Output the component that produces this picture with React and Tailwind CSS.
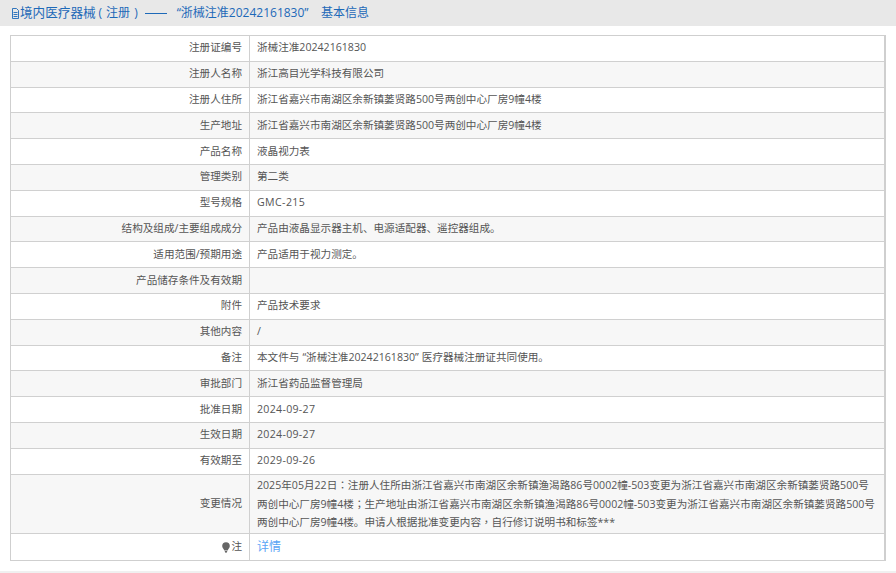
const Q = ({ children }) => <span className="font-['Noto_Sans_CJK_TC',sans-serif]">{children}</span>;

const rows = [
  ["注册证编号", "浙械注准20242161830"],
  ["注册人名称", "浙江高目光学科技有限公司"],
  ["注册人住所", "浙江省嘉兴市南湖区余新镇蒌贤路500号两创中心厂房9幢4楼"],
  ["生产地址", "浙江省嘉兴市南湖区余新镇蒌贤路500号两创中心厂房9幢4楼"],
  ["产品名称", "液晶视力表"],
  ["管理类别", "第二类"],
  ["型号规格", <span className="tracking-[0.4px]">GMC-215</span>],
  ["结构及组成/主要组成成分", "产品由液晶显示器主机、电源适配器、遥控器组成。"],
  ["适用范围/预期用途", "产品适用于视力测定。"],
  ["产品储存条件及有效期", ""],
  ["附件", "产品技术要求"],
  ["其他内容", "/"],
  ["备注", <>本文件与<span className="ml-[3px]">“</span>浙械注准20242161830<span className="mr-[3px]">”</span>医疗器械注册证共同使用。</>],
  ["审批部门", "浙江省药品监督管理局"],
  ["批准日期", <span className="tracking-[0.3px]">2024-09-27</span>],
  ["生效日期", <span className="tracking-[0.3px]">2024-09-27</span>],
  ["有效期至", <span className="tracking-[0.3px]">2029-09-26</span>],
];

function Row({ label, children, even, tall, last }) {
  return (
    <div className={`flex ${tall ? "h-[59.5px]" : last ? "h-[26px]" : "h-[25.8px]"} ${last ? "" : "border-b border-[#d0d0d0]"} ${even ? "bg-[#f7f7f7]" : "bg-white"}`}>
      <div className="w-[239px] shrink-0 flex items-center justify-end pr-[7px] border-r border-[#d0d0d0]">{label}</div>
      <div className="flex-1 flex items-center pl-[7px] pr-[9px] min-w-0">{children}</div>
    </div>
  );
}

export default function App() {
  return (
    <div className="w-[896px] h-[573px] overflow-hidden bg-white text-[10.6px] text-[#555] font-['Open_Sans','Noto_Sans_CJK_SC',sans-serif]">
      <div className="h-[26px] bg-[#e8e8e8] flex items-center pl-[12px] text-[12px] text-[#1d69b8] whitespace-pre">
        <svg className="w-[7px] h-[11px] shrink-0" viewBox="0 0 7 11" fill="none" stroke="currentColor" strokeWidth="0.9">
          <path d="M0.5 0.5h4l2 2v8h-6z" />
          <path d="M1.5 4.5h4M1.5 6.5h4M1.5 8.5h4" />
        </svg>
        <span className="ml-[1px] text-[12.6px]">境内医疗器械</span>
        <span className="ml-[3px]">(</span>
        <span className="ml-[4px]">注册</span>
        <span className="ml-[4px]">)</span>
        <span className="ml-[7px] w-[22px] h-[1px] bg-[#1d69b8]"></span>
        <span className="ml-[10px]">“</span>
        <span>浙械注准20242161830”</span>
        <span className="ml-[12.5px]">基本信息</span>
      </div>
      <div className="mt-[9px] ml-[10px] w-[876px] border border-[#cfcfcf] border-r-2">
        {rows.map(([l, v], i) => (
          <Row key={l} label={l} even={i % 2 === 1}>{v}</Row>
        ))}
        <Row label="变更情况" even tall>
          <div className="leading-[17.5px]">
            2025年05月22日<Q>：</Q>注册人住所由浙江省嘉兴市南湖区余新镇渔渴路86号0002幢-503变更为浙江省嘉兴市南湖区余新镇蒌贤路500号两创中心厂房9幢4楼<Q>；</Q>生产地址由浙江省嘉兴市南湖区余新镇渔渴路86号0002幢-503变更为浙江省嘉兴市南湖区余新镇蒌贤路500号两创中心厂房9幢4楼。申请人根据批准变更内容<Q>，</Q>自行修订说明书和标签***
          </div>
        </Row>
        <Row
          last
          label={
            <>
              <svg className="w-[8px] h-[11px] text-[#666] mr-[1px]" viewBox="0 0 8 11" fill="currentColor">
                <path d="M4 0.3a3.8 3.8 0 0 1 3.8 3.8c0 1.8-1.4 3-2.1 4.3H2.3C1.6 7.1 0.2 5.9 0.2 4.1A3.8 3.8 0 0 1 4 0.3z" />
                <path d="M2.6 9h2.8L4.6 10.7H3.4z" />
              </svg>
              <span>注</span>
            </>
          }
        >
          <a className="text-[12px] text-[#5aa5f5]">详情</a>
        </Row>
      </div>
      <div className="mt-[10px] h-[3px] bg-[#f0f0f0]" />
    </div>
  );
}
